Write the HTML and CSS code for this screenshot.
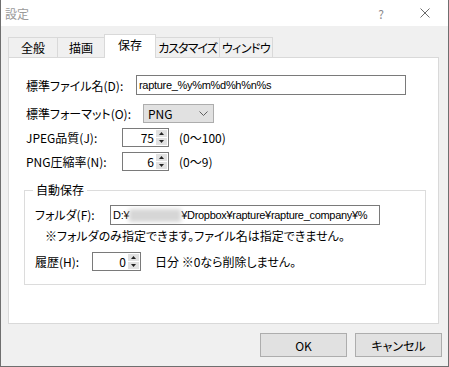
FILE: index.html
```html
<!DOCTYPE html>
<html lang="ja">
<head>
    <meta charset="UTF-8">
    <title>設定</title>
    <link rel="stylesheet" href="styles.css">
</head>
<body>
    <div class="window">
        <div class="titlebar">
            <span class="title">設定</span>
            <span class="help">?</span>
            <span class="close">
                <svg width="10" height="10" viewBox="0 0 10 10"><path d="M0.5 0.5L9.5 9.5M9.5 0.5L0.5 9.5" stroke="#6b6b6b" stroke-width="1" fill="none"/></svg>
            </span>
        </div>
        <div class="tabs">
            <div class="tab tab-general">全般</div>
            <div class="tab tab-draw">描画</div>
            <div class="tab tab-save active">保存</div>
            <div class="tab tab-custom">カスタマイズ</div>
            <div class="tab tab-window">ウィンドウ</div>
        </div>
        <div class="panel">
            <div class="row row-name">
                <label class="lbl lbl-name">標準ファイル名(D):</label>
                <div class="field">rapture_%y%m%d%h%n%s</div>
            </div>
            <div class="row row-format">
                <label class="lbl lbl-format">標準フォーマット(O):</label>
                <div class="combo">
                    <span>PNG</span>
                    <svg width="9" height="5" viewBox="0 0 9 5"><path d="M0.5 0.5L4.5 4.5L8.5 0.5" stroke="#606060" fill="none"/></svg>
                </div>
            </div>
            <div class="row row-spin">
                <label class="lbl lbl-quality">JPEG品質(J):</label>
                <div class="spin">
                    <span class="spin-val">75</span>
                    <span class="spin-btns">
                        <span class="spin-up"><svg width="5" height="3" viewBox="0 0 5 3"><path d="M0 3L2.5 0L5 3Z" fill="#222"/></svg></span>
                        <span class="spin-down"><svg width="5" height="3" viewBox="0 0 5 3"><path d="M0 0L2.5 3L5 0Z" fill="#222"/></svg></span>
                    </span>
                </div>
                <span class="range">(0〜100)</span>
            </div>
            <div class="row row-spin">
                <label class="lbl lbl-quality">PNG圧縮率(N):</label>
                <div class="spin">
                    <span class="spin-val">6</span>
                    <span class="spin-btns">
                        <span class="spin-up"><svg width="5" height="3" viewBox="0 0 5 3"><path d="M0 3L2.5 0L5 3Z" fill="#222"/></svg></span>
                        <span class="spin-down"><svg width="5" height="3" viewBox="0 0 5 3"><path d="M0 0L2.5 3L5 0Z" fill="#222"/></svg></span>
                    </span>
                </div>
                <span class="range">(0〜9)</span>
            </div>
            <fieldset class="group">
                <legend>自動保存</legend>
                <div class="row row-folder">
                    <label class="lbl lbl-folder">フォルダ(F):</label>
                    <div class="field">D:¥<span class="blur"></span>¥Dropbox¥rapture¥rapture_company¥%</div>
                </div>
                <div class="note">※フォルダのみ指定できます。ファイル名は指定できません。</div>
                <div class="row row-history">
                    <label class="lbl lbl-history">履歴(H):</label>
                    <div class="spin spin-wide">
                        <span class="spin-val">0</span>
                        <span class="spin-btns">
                            <span class="spin-up"><svg width="5" height="3" viewBox="0 0 5 3"><path d="M0 3L2.5 0L5 3Z" fill="#222"/></svg></span>
                            <span class="spin-down"><svg width="5" height="3" viewBox="0 0 5 3"><path d="M0 0L2.5 3L5 0Z" fill="#222"/></svg></span>
                        </span>
                    </div>
                    <span class="days">日分 ※0なら削除しません。</span>
                </div>
            </fieldset>
        </div>
        <div class="buttons">
            <button>OK</button>
            <button>キャンセル</button>
        </div>
    </div>
</body>
</html>
```

FILE: styles.css
```css
body {
    margin: 0;
    font-family: "Noto Sans CJK JP", sans-serif;
    font-size: 12px;
    font-feature-settings: "palt";
    color: #000;
    background: #fff;
}
.window {
    width: 449px;
    height: 367px;
    box-sizing: border-box;
    border: 1px solid #6f6f6f;
    border-top: none;
    background: #f0f0f0;
    display: flex;
    flex-direction: column;
}
.titlebar {
    height: 26px;
    background: #fff;
    display: flex;
    align-items: center;
}
.title {
    flex: 1;
    margin-left: 4px;
    color: #9a9a9a;
}
.help {
    width: 42px;
    text-align: center;
    color: #8a8a8a;
}
.close {
    width: 46px;
    height: 26px;
    display: flex;
    align-items: center;
    justify-content: center;
}
.tabs {
    display: flex;
    align-items: flex-end;
    height: 24px;
    margin-top: 7px;
    padding-left: 7px;
}
.tab {
    box-sizing: border-box;
    height: 20px;
    border: 1px solid #d9d9d9;
    border-bottom: none;
    background: #f0f0f0;
    text-align: center;
    line-height: 19px;
    margin-left: -1px;
    white-space: nowrap;
    overflow: hidden;
}
.tab-general { width: 50px; margin-left: 0; }
.tab-draw { width: 48px; }
.tab-save { width: 52px; }
.tab-custom { width: 65px; letter-spacing: -1px; }
.tab-window { width: 54px; letter-spacing: -0.6px; }
.tab.active {
    position: relative;
    z-index: 1;
    height: 24px;
    margin-bottom: -1px;
    background: #fff;
    line-height: 19px;
    padding-bottom: 3px;
}
.panel {
    box-sizing: border-box;
    width: 431px;
    height: 267px;
    margin-left: 7px;
    border: 1px solid #d9d9d9;
    background: #fff;
    padding: 17px 0 0 17px;
}
.row {
    display: flex;
    align-items: center;
}
.lbl {
    white-space: nowrap;
}
.lbl-name { width: 110px; }
.lbl-format { width: 117px; }
.lbl-quality { width: 96px; }
.lbl-folder { width: 75px; }
.lbl-history { width: 57px; }
.row-name { height: 20px; }
.row-format { height: 19px; margin-top: 9px; }
.row-spin { height: 19px; margin-top: 5px; }
.field {
    box-sizing: border-box;
    width: 270px;
    height: 20px;
    border: 1px solid #7a7a7a;
    padding: 0 2px;
    font-family: "Liberation Sans", "Noto Sans CJK JP", sans-serif;
    font-size: 11px;
    letter-spacing: -0.3px;
    line-height: 18px;
    white-space: nowrap;
    overflow: hidden;
}
.blur {
    display: inline-block;
    width: 52px;
    height: 13px;
    vertical-align: -3px;
    background: #d6d6d6;
    filter: blur(2px);
}
.combo {
    box-sizing: border-box;
    width: 71px;
    height: 19px;
    border: 1px solid #adadad;
    background: #e1e1e1;
    display: flex;
    align-items: center;
    justify-content: space-between;
    padding: 0 5px 0 4px;
}
.spin {
    box-sizing: border-box;
    width: 47px;
    height: 19px;
    border: 1px solid #7a7a7a;
    display: flex;
}
.spin-wide { width: 49px; }
.spin-val {
    flex: 1;
    text-align: right;
    padding-right: 2px;
    line-height: 17px;
}
.spin-btns {
    width: 11px;
    display: flex;
    flex-direction: column;
    gap: 1px;
    padding: 1px 1px 1px 0;
}
.spin-up, .spin-down {
    flex: 1;
    background: #e1e1e1;
    display: flex;
    align-items: center;
    justify-content: center;
}
.range {
    margin-left: 10px;
}
.group {
    box-sizing: border-box;
    width: 402px;
    margin: 12px 0 0 -2px;
    padding: 0 0 13px 10px;
    border: 1px solid #dcdcdc;
}
.group legend {
    padding: 0 3px;
    margin-left: -2px;
    line-height: 14px;
}
.row-folder { height: 19px; margin-top: 8px; }
.note {
    margin: 5px 0 0 10px;
    line-height: 14px;
}
.row-history { height: 19px; margin-top: 9px; }
.days {
    margin-left: 14px;
}
.buttons {
    display: flex;
    justify-content: flex-end;
    gap: 8px;
    margin-top: 9px;
    padding-right: 6px;
}
.buttons button {
    width: 87px;
    height: 24px;
    padding: 0;
    border: 1px solid #adadad;
    background: #e1e1e1;
    font: inherit;
    color: #000;
}
```
